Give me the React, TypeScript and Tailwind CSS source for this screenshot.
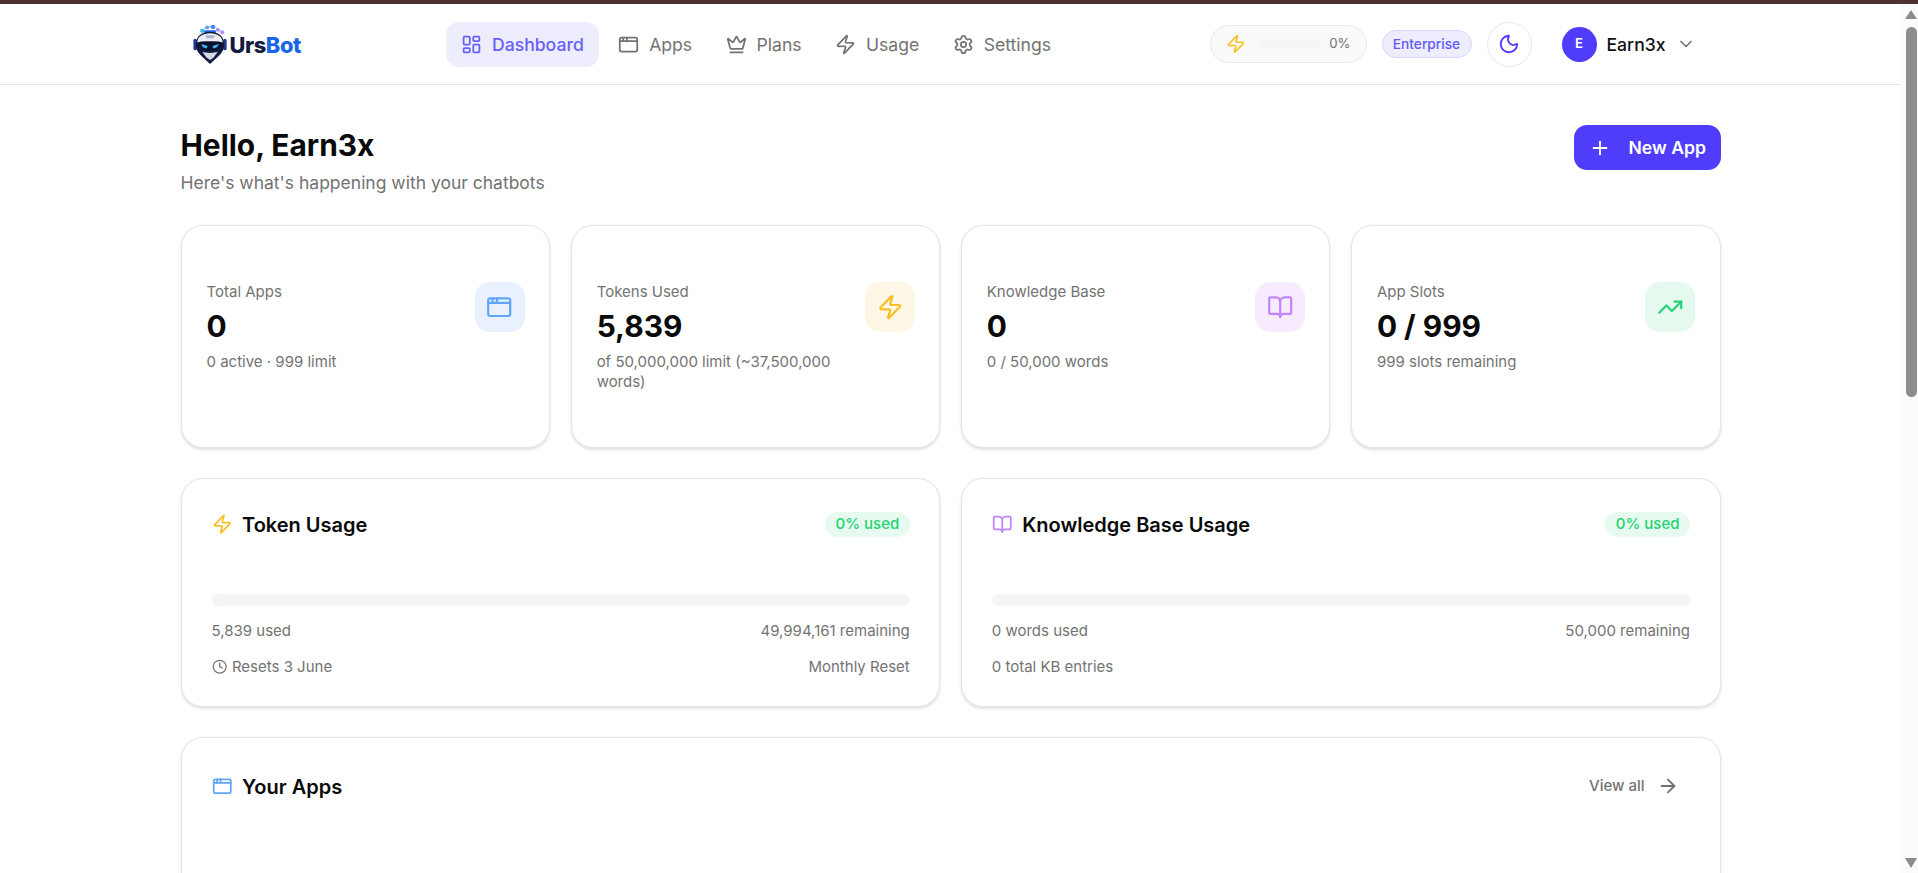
import {
  AppWindow,
  ArrowRight,
  BookOpen,
  ChevronDown,
  Clock,
  Crown,
  LayoutDashboard,
  Moon,
  Plus,
  Settings,
  TrendingUp,
  Zap,
} from 'lucide-react';
import type { ReactNode } from 'react';

const navItems = [
  { label: 'Dashboard', icon: LayoutDashboard, active: true },
  { label: 'Apps', icon: AppWindow },
  { label: 'Plans', icon: Crown },
  { label: 'Usage', icon: Zap },
  { label: 'Settings', icon: Settings },
];

const stats = [
  {
    label: 'Total Apps',
    value: '0',
    sub: '0 active · 999 limit',
    icon: AppWindow,
    box: 'bg-[#e9f1fe]',
    tint: 'text-[#60a5fa]',
  },
  {
    label: 'Tokens Used',
    value: '5,839',
    sub: 'of 50,000,000 limit (~37,500,000 words)',
    icon: Zap,
    box: 'bg-[#fef7e6]',
    tint: 'text-[#fbbf24]',
  },
  {
    label: 'Knowledge Base',
    value: '0',
    sub: '0 / 50,000 words',
    icon: BookOpen,
    box: 'bg-[#f6ebff]',
    tint: 'text-[#c084fc]',
  },
  {
    label: 'App Slots',
    value: '0 / 999',
    sub: '999 slots remaining',
    icon: TrendingUp,
    box: 'bg-[#e6f9ee]',
    tint: 'text-[#22d37a]',
  },
];

function Logo() {
  return (
    <div className="flex items-center w-[120px] ml-[12px]">
      <svg viewBox="0 0 36 42" className="w-[36px] h-[41px] shrink-0">
        {/* circuit dots on top of the helmet */}
        <path d="M9 8 13 3h6l4 1 6 4" fill="none" stroke="#60a5fa" strokeWidth="1" />
        <circle cx="9" cy="7" r="2.2" fill="#38bdf8" />
        <circle cx="14" cy="3.5" r="2" fill="#60a5fa" />
        <circle cx="20" cy="3" r="2.2" fill="#3b82f6" />
        <circle cx="25" cy="6" r="2" fill="#a78bfa" />
        <circle cx="29.5" cy="8.5" r="2" fill="#c084fc" />
        <rect x="11" y="6.5" width="12" height="3" rx="1" fill="#2563eb" />
        {/* ear pieces */}
        <rect x="0" y="15" width="3.5" height="12" rx="1.7" fill="#1e3a8a" />
        <rect x="30.5" y="15" width="3.5" height="12" rx="1.7" fill="#1e3a8a" />
        {/* head */}
        <path d="M17 8c9 0 14.5 5 14.5 13 0 6-3 9-6.500 12.500L17 41l-8-7.500C5.500 30 2.500 27 2.500 21 2.500 13 8 8 17 8z" fill="#10193f" />
        <path d="M17 9.500c7.500 0 13 3.500 13 9.500l-4-1H8l-4 1c0-6 5.500-9.500 13-9.500z" fill="#eceef4" />
        <path d="M12 11.500h10l-1.500 3h-7z" fill="#aab2c6" />
        <path d="M5 19c5-1.500 19-1.500 24 0 .5 3.500-1.500 6-5 7.500-4 1-10 1-14 0-3.500-1.500-5.500-4-5-7.500z" fill="#0a102c" />
        <path d="M8 20.500l6.500 2-1 2.500c-3 0-4.500-1.500-5.500-4.500zM26 20.500l-6.500 2 1 2.500c3 0 4.500-1.500 5.500-4.500z" fill="#38bdf8" />
        <path d="M9 28.500c4 1.500 12 1.500 16 0l-4.500 6L17 37l-3.500-2.500z" fill="#d5d9e4" />
      </svg>
      <span className="ml-[1px] mt-[3px] text-[21.8px] leading-none font-extrabold tracking-[-0.4px] text-[#121a40]">
        Urs<span className="text-[#1766e8]">Bot</span>
      </span>
    </div>
  );
}

function Nav() {
  return (
    <header className="h-[81px] shrink-0 border-b border-[#e5e5e5] bg-white">
      <div className="w-[1540px] h-full mx-auto flex items-center">
        <Logo />
        <nav className="ml-[133px] flex items-center gap-[4.4px]">
          {navItems.map(({ label, icon: Icon, active }) => (
            <a
              key={label}
              className={
                active
                  ? 'flex items-center gap-[10px] h-[45px] px-[15.5px] rounded-[13px] bg-[#eeedfe] text-[#6660f9] text-[17.6px] font-medium'
                  : 'flex items-center gap-[10px] h-[45px] px-[14.5px] rounded-[13px] text-[#737373] text-[17.6px]'
              }
            >
              <Icon className="w-[21px] h-[21px]" strokeWidth={2} />
              <span className="pt-[2px]">{label}</span>
            </a>
          ))}
        </nav>

        <div className="ml-auto flex items-center">
          <div className="flex items-center h-[38px] w-[157px] pl-[15px] rounded-full border border-[#e8e8e8] bg-[#fafafa]">
            <Zap className="w-[19.8px] h-[19.8px] text-[#fbbf24]" strokeWidth={2} />
            <div className="ml-[14px] w-[61px] h-[8px] rounded-full bg-[#f5f5f5]" />
            <span className="ml-[9px] text-[13.2px] text-[#737373]">0%</span>
          </div>
          <span className="ml-[15px] pt-[1px] flex items-center justify-center h-[28px] w-[90px] rounded-full border border-[#d9d6fd] bg-[#eeedfe] text-[13.7px] font-medium text-[#625af8]">
            Enterprise
          </span>
          <button className="ml-[15px] flex items-center justify-center w-[45px] h-[45px] rounded-full border border-[#e8e8e8]">
            <Moon className="w-[22px] h-[22px] text-[#4f3dfb]" strokeWidth={2} />
          </button>
          <div className="ml-[30px] flex items-center w-[159px]">
            <span className="flex items-center justify-center w-[35px] h-[35px] rounded-full bg-[#4f3dfb] text-white text-[13.2px] font-semibold">
              E
            </span>
            <span className="ml-[10px] pt-[2px] text-[17.6px] font-medium text-[#111]">Earn3x</span>
            <ChevronDown className="ml-[10px] w-[20px] h-[20px] text-[#737373]" strokeWidth={2} />
          </div>
        </div>
      </div>
    </header>
  );
}

function Card({ className, children }: { className?: string; children: ReactNode }) {
  return (
    <div
      className={`rounded-[22px] border border-[#e5e5e5] bg-white shadow-[0_1.5px_3px_rgba(0,0,0,0.12)] ${className ?? ''}`}
    >
      {children}
    </div>
  );
}

function StatCard({ stat }: { stat: (typeof stats)[number] }) {
  const Icon = stat.icon;
  return (
    <Card className="flex items-start justify-between pl-[25px] pr-[24.5px] pt-[56px] pb-[55px]">
      <div className="min-w-0 pr-[18px]">
        <p className="text-[15px] leading-[20px] text-[#737373]">{stat.label}</p>
        <p className="mt-[3.5px] text-[29.9px] leading-[40px] font-bold text-[#0a0a0a]">{stat.value}</p>
        <p className="mt-[6.5px] text-[15px] leading-[20px] text-[#737373]">{stat.sub}</p>
      </div>
      <div className={`flex shrink-0 items-center justify-center w-[50px] h-[50px] rounded-[15px] ${stat.box}`}>
        <Icon className={`w-[26.4px] h-[26.4px] ${stat.tint}`} strokeWidth={2} />
      </div>
    </Card>
  );
}

function UsageCard({
  title,
  icon,
  used,
  remaining,
  footLeft,
  footRight,
}: {
  title: string;
  icon: ReactNode;
  used: string;
  remaining: string;
  footLeft: ReactNode;
  footRight?: string;
}) {
  return (
    <Card className="h-[229px] pl-[30px] pr-[29.5px] pt-[32px]">
      <div className="flex items-center justify-between h-[26px]">
        <div className="flex items-center gap-[10px]">
          {icon}
          <h2 className="mt-[1px] text-[20px] font-semibold text-[#0a0a0a]">{title}</h2>
        </div>
        <span className="flex items-center h-[25px] px-[10.5px] rounded-full bg-[#e6faef] text-[15px] font-medium text-[#22d36f]">
          0% used
        </span>
      </div>
      <div className="mt-[57px] h-[12px] rounded-full bg-[#f5f5f5]" />
      <div className="mt-[15px] flex justify-between text-[15px] leading-[20px] text-[#737373]">
        <span>{used}</span>
        <span>{remaining}</span>
      </div>
      <div className="mt-[15.5px] flex justify-between text-[15px] leading-[20px] text-[#737373]">
        <span className="flex items-center gap-[5px]">{footLeft}</span>
        {footRight && <span>{footRight}</span>}
      </div>
    </Card>
  );
}

function FakeScrollbar() {
  return (
    <aside className="w-[17px] shrink-0 bg-[#fbfbfb] flex flex-col items-center pl-[3px]">
      <svg viewBox="0 0 12 9" className="mt-[6px] w-[12px] h-[9px] fill-[#8c8c8c]">
        <path d="M6 0 12 9H0z" />
      </svg>
      <div className="mt-[8px] w-[11px] h-[370px] rounded-full bg-[#8c8c8c]" />
      <svg viewBox="0 0 12 10" className="mt-auto mb-[5px] w-[12px] h-[10px] fill-[#8c8c8c]">
        <path d="M0 0h12L6 10z" />
      </svg>
    </aside>
  );
}

export default function App() {
  return (
    <div className="h-[873px] overflow-hidden flex flex-col bg-white font-['Inter',sans-serif]">
      <div className="h-[4px] shrink-0 bg-[#4f3130]" />
      <div className="flex flex-1 min-h-0">
        <div className="flex-1 min-w-0 flex flex-col overflow-hidden">
          <Nav />
          <main className="w-[1540px] mx-auto pt-[40px]">
            <div className="flex items-start justify-between h-[100px]">
              <div>
                <h1 className="text-[29.9px] leading-[40px] font-bold text-[#0a0a0a]">Hello, Earn3x</h1>
                <p className="mt-[5px] text-[17.5px] leading-[26px] text-[#737373]">
                  Here's what's happening with your chatbots
                </p>
              </div>
              <button className="flex items-center h-[45px] w-[147px] pl-[15px] rounded-[13px] bg-[#4f3dfb] text-white text-[17.6px] font-semibold">
                <Plus className="w-[22px] h-[22px]" strokeWidth={2} />
                <span className="ml-[18px] pt-[1px]">New App</span>
              </button>
            </div>

            <section className="grid grid-cols-4 gap-[20.5px]">
              {stats.map((stat) => (
                <StatCard key={stat.label} stat={stat} />
              ))}
            </section>

            <section className="mt-[30px] grid grid-cols-2 gap-[20.5px]">
              <UsageCard
                title="Token Usage"
                icon={<Zap className="w-[20.5px] h-[20.5px] text-[#fbbf24]" strokeWidth={2} />}
                used="5,839 used"
                remaining="49,994,161 remaining"
                footLeft={
                  <>
                    <Clock className="w-[15.4px] h-[15.4px]" strokeWidth={2} />
                    Resets 3 June
                  </>
                }
                footRight="Monthly Reset"
              />
              <UsageCard
                title="Knowledge Base Usage"
                icon={<BookOpen className="w-[20.5px] h-[20.5px] text-[#c084fc]" strokeWidth={2} />}
                used="0 words used"
                remaining="50,000 remaining"
                footLeft="0 total KB entries"
              />
            </section>

            <Card className="mt-[30px] h-[300px] px-[30px] pt-[35px]">
              <div className="flex items-center justify-between h-[26px]">
                <div className="flex items-center gap-[10px]">
                  <AppWindow className="w-[20.5px] h-[20.5px] text-[#60a5fa]" strokeWidth={2} />
                  <h2 className="mt-[2px] text-[20px] font-semibold text-[#0a0a0a]">Your Apps</h2>
                </div>
                <a className="mr-[11px] flex items-center gap-[12px] text-[15px] font-medium text-[#737373]">
                  View all
                  <ArrowRight className="w-[22px] h-[22px]" strokeWidth={2} />
                </a>
              </div>
            </Card>
          </main>
        </div>
        <FakeScrollbar />
      </div>
    </div>
  );
}
